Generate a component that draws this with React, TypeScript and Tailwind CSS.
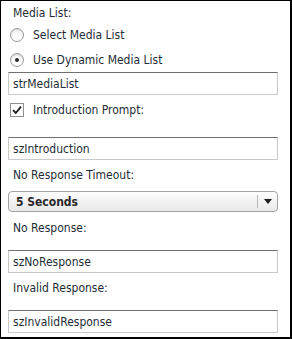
const font = "font-['DejaVu_Sans_Condensed','DejaVu_Sans',sans-serif]";

function Radio({ checked }: { checked?: boolean }) {
  return (
    <span className="flex h-[14px] w-[14px] items-center justify-center rounded-full border border-[#9a9a9a] bg-gradient-to-b from-[#f4f4f4] to-[#ffffff] shadow-[inset_0_1px_1px_rgba(0,0,0,0.15)]">
      {checked && <span className="h-[4px] w-[4px] rounded-full bg-[#2a2a2a]" />}
    </span>
  );
}

function TextBox({ value, className = '' }: { value: string; className?: string }) {
  return (
    <div
      className={`flex h-[23px] w-[270px] items-center border border-[#c9c9c9] border-t-[#6f6f6f] bg-white pl-[4px] text-[12px] text-[#1f2d36] ${className}`}
    >
      {value}
    </div>
  );
}

function Label({ children, className = '' }: { children: string; className?: string }) {
  return <div className={`flex h-[16px] items-center pl-[5px] text-[12px] text-[#1f2d36] ${className}`}>{children}</div>;
}

export default function App() {
  return (
    <div
      className={`box-border flex h-[339px] w-[292px] flex-col border-l border-t border-r-2 border-b-2 border-black bg-white pl-[7px] pt-[4px] ${font}`}
    >
      <Label>Media List:</Label>

      <div className="mt-[6px] flex h-[16px] items-center gap-[9px] pl-[2px] text-[12px] text-[#1f2d36]">
        <Radio />
        <span>Select Media List</span>
      </div>
      <div className="mt-[9px] flex h-[16px] items-center gap-[9px] pl-[2px] text-[12px] text-[#1f2d36]">
        <Radio checked />
        <span>Use Dynamic Media List</span>
      </div>

      <TextBox value="strMediaList" className="mt-[4px]" />

      <div className="mt-[7px] flex h-[16px] items-center gap-[9px] pl-[2px] text-[12px] text-[#1f2d36]">
        <span className="flex h-[14px] w-[14px] items-center justify-center border border-[#8f8f8f] bg-white">
          <svg width="10" height="10" viewBox="0 0 10 10">
            <path d="M1 5.2 L3.8 8 L9 1.6" fill="none" stroke="#1c1c1c" strokeWidth="1.8" />
          </svg>
        </span>
        <span>Introduction Prompt:</span>
      </div>

      <TextBox value="szIntroduction" className="mt-[19px]" />

      <Label className="mt-[7px]">No Response Timeout:</Label>

      <div className="mt-[8px] flex h-[21px] w-[270px] items-center rounded-[4px] border border-[#a3a3a3] bg-gradient-to-b from-[#fdfdfd] to-[#e9e9e9] text-[12px] font-bold text-[#2a2a2a]">
        <span className="flex-1 pl-[7px]">5 Seconds</span>
        <span className="h-[13px] w-px bg-[#b9b9b9]" />
        <span className="flex w-[19px] justify-center">
          <svg width="8" height="5" viewBox="0 0 8 5">
            <path d="M0 0 H8 L4 5 Z" fill="#1c1c1c" />
          </svg>
        </span>
      </div>

      <Label className="mt-[8px]">No Response:</Label>

      <TextBox value="szNoResponse" className="mt-[14px]" />

      <Label className="mt-[7px]">Invalid Response:</Label>

      <TextBox value="szInvalidResponse" className="mt-[14px]" />
    </div>
  );
}
